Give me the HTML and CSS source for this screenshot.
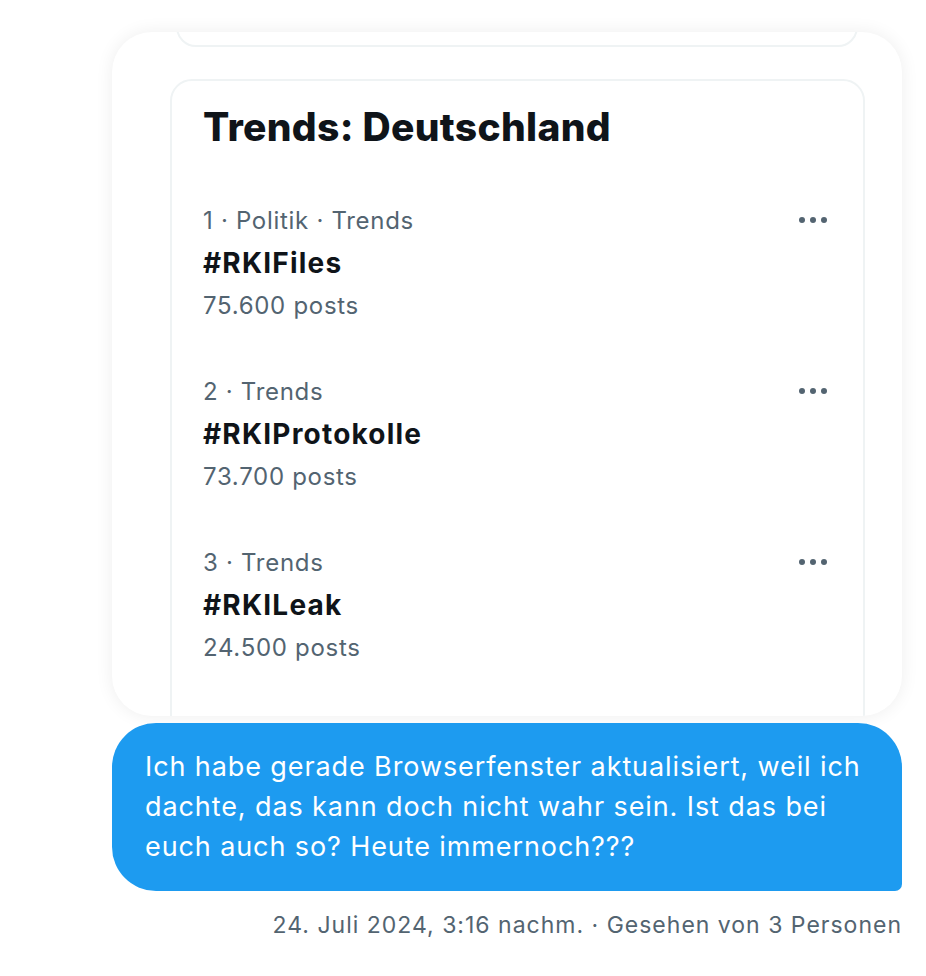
FILE: index.html
```html
<!DOCTYPE html>
<html lang="de">
<head>
<meta charset="utf-8">
<title>Nachricht</title>
<link rel="stylesheet" href="styles.css">
</head>
<body>
<div class="thread">
  <div class="attachment">
    <div class="prev-card"></div>
    <div class="trends-card">
      <h2 class="trends-title">Trends: Deutschland</h2>
      <div class="trend">
        <div class="trend-text">
          <div class="trend-meta">1 · Politik · Trends</div>
          <div class="trend-name">#RKIFiles</div>
          <div class="trend-count">75.600 posts</div>
        </div>
        <div class="more"><span></span><span></span><span></span></div>
      </div>
      <div class="trend">
        <div class="trend-text">
          <div class="trend-meta">2 · Trends</div>
          <div class="trend-name">#RKIProtokolle</div>
          <div class="trend-count">73.700 posts</div>
        </div>
        <div class="more"><span></span><span></span><span></span></div>
      </div>
      <div class="trend">
        <div class="trend-text">
          <div class="trend-meta">3 · Trends</div>
          <div class="trend-name">#RKILeak</div>
          <div class="trend-count">24.500 posts</div>
        </div>
        <div class="more"><span></span><span></span><span></span></div>
      </div>
    </div>
  </div>
  <div class="bubble">Ich habe gerade Browserfenster aktualisiert, weil ich dachte, das kann doch nicht wahr sein. Ist das bei euch auch so? Heute immernoch???</div>
  <div class="msg-meta">24. Juli 2024, 3:16 nachm. · Gesehen von 3 Personen</div>
</div>
</body>
</html>
```

FILE: styles.css
```css
html, body {
  margin: 0;
  padding: 0;
  background: #ffffff;
}

body {
  font-family: "Inter", "Liberation Sans", sans-serif;
  color: #0f1419;
}

.thread {
  width: 790px;
  margin-left: 112px;
  padding-top: 32px;
  display: flex;
  flex-direction: column;
}

.attachment {
  height: 684px;
  border-radius: 40px;
  overflow: hidden;
  background: #ffffff;
  box-shadow: 0 0 18px rgba(0, 0, 0, 0.07);
  display: flex;
  flex-direction: column;
  padding: 0 37px 0 58px;
}

.prev-card {
  flex: none;
  height: 60px;
  margin: -49px 7px 0 6px;
  border: 2px solid #eff3f4;
  border-radius: 20px;
}

.trends-card {
  flex: none;
  margin-top: 32px;
  border: 2px solid #eff3f4;
  border-radius: 22px;
  padding: 22px 36px 40px 31px;
  min-height: 700px;
}

.trends-title {
  margin: 0 0 48px 0;
  font-size: 39px;
  line-height: 48px;
  font-weight: 800;
  letter-spacing: 0.3px;
  color: #0f1419;
}

.trend {
  display: flex;
  justify-content: space-between;
  align-items: flex-start;
  padding: 21px 0 22px;
}

.trend:first-of-type {
  padding-top: 0;
}

.trend-meta,
.trend-count {
  font-size: 24px;
  line-height: 43px;
  letter-spacing: 0.7px;
  color: #536471;
}

.trend-name {
  font-size: 28px;
  line-height: 42px;
  font-weight: 700;
  letter-spacing: 1.2px;
  color: #0f1419;
}

.more {
  display: flex;
  gap: 5px;
  padding-top: 18px;
}

.more span {
  width: 6px;
  height: 6px;
  border-radius: 50%;
  background: #536471;
}

.bubble {
  margin-top: 7px;
  background: #1d9bf0;
  color: #ffffff;
  border-radius: 44px 44px 7px 44px;
  padding: 24px 33px 24px 33px;
  font-size: 27px;
  line-height: 40px;
  letter-spacing: 0.9px;
}

.msg-meta {
  margin-top: 20px;
  text-align: right;
  font-size: 23px;
  line-height: 28px;
  letter-spacing: 1px;
  color: #536471;
}
```
